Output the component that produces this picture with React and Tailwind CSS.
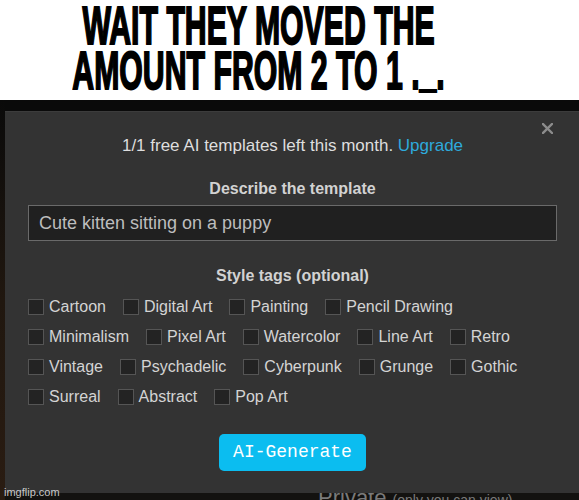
const TAG_ROWS = [
  ['Cartoon', 'Digital Art', 'Painting', 'Pencil Drawing'],
  ['Minimalism', 'Pixel Art', 'Watercolor', 'Line Art', 'Retro'],
  ['Vintage', 'Psychadelic', 'Cyberpunk', 'Grunge', 'Gothic'],
  ['Surreal', 'Abstract', 'Pop Art'],
]

function Tag({ label }) {
  return (
    <label className="flex items-center gap-[5px] mr-[17px]">
      <span className="w-4 h-4 bg-[#232323] border border-[#555]" />
      <span className="text-[16px] text-[#d4d4d4]">{label}</span>
    </label>
  )
}

function Caption() {
  return (
    <div className="h-[100px] bg-white flex flex-col items-center pt-[3px] pr-[62px] overflow-hidden font-['Liberation_Sans',sans-serif] font-bold text-[54px] leading-[45px] text-black [-webkit-text-stroke:2px_#000]">
      <p className="whitespace-nowrap scale-x-[0.56]">WAIT THEY MOVED THE</p>
      <p className="whitespace-nowrap scale-x-[0.56]">
        AMOUNT FROM 2 TO 1 .<span className="inline-block -translate-y-[4px]">_</span>.
      </p>
    </div>
  )
}

export default function App() {
  return (
    <div className="w-[579px] h-[500px] overflow-hidden bg-white font-['Liberation_Sans',sans-serif]">
      <Caption />

      <div className="relative h-[400px] flex bg-[#0a0a0a]">
        {/* page behind the dialog */}
        <div className="w-[5px] bg-gradient-to-b from-[#0a0a0a] via-[#20170f] to-[#2a1c12]" />

        <div className="flex-1 flex flex-col">
          <div className="h-[11px] bg-[#0a0a0a]" />

          {/* dialog */}
          <div className="relative h-[382px] bg-[#333333] border-t border-[#3c3c3c] flex flex-col items-center pt-[24px] pl-[23px] pr-[22px]">
            <svg className="absolute top-[11px] right-[26px] w-[11px] h-[11px]" viewBox="0 0 11 11">
              <path d="M1 1 L10 10 M10 1 L1 10" stroke="#8c8c8c" strokeWidth="2.4" strokeLinecap="square" />
            </svg>

            <p className="text-[17px] leading-[20px] text-[#dedede]">
              1/1 free AI templates left this month. <span className="text-[#2eaadc]">Upgrade</span>
            </p>

            <p className="mt-[23px] text-[16px] leading-[20px] font-bold text-[#d2d2d2]">Describe the template</p>
            <div className="mt-[6px] w-full h-[36px] bg-[#202020] border border-[#6a6a6a] flex items-center px-[10px] text-[18px] text-[#bdbdbd]">
              Cute kitten sitting on a puppy
            </div>

            <p className="mt-[25px] text-[16px] leading-[20px] font-bold text-[#d2d2d2]">Style tags (optional)</p>
            <div className="mt-[6px] w-full flex flex-col">
              {TAG_ROWS.map((row, i) => (
                <div key={i} className="h-[30px] flex items-center">
                  {row.map(t => <Tag key={t} label={t} />)}
                </div>
              ))}
            </div>

            <button className="mt-[22px] w-[147px] h-[37px] rounded-[5px] bg-[#0bbdf0] text-white font-['Liberation_Mono',monospace] text-[18px]">
              AI-Generate
            </button>
          </div>

          <div className="h-[7px] bg-[#131210] overflow-hidden pl-[313px] flex items-start">
            <span className="-mt-[6px] text-[22px] leading-[22px] text-[#7a7a7a] whitespace-nowrap">
              Private <span className="text-[14px]">(only you can view)</span>
            </span>
          </div>
        </div>

        <span className="absolute left-[4px] bottom-[2px] text-[11px] leading-[12px] text-[#dcdcdc]/90">imgflip.com</span>
      </div>
    </div>
  )
}
